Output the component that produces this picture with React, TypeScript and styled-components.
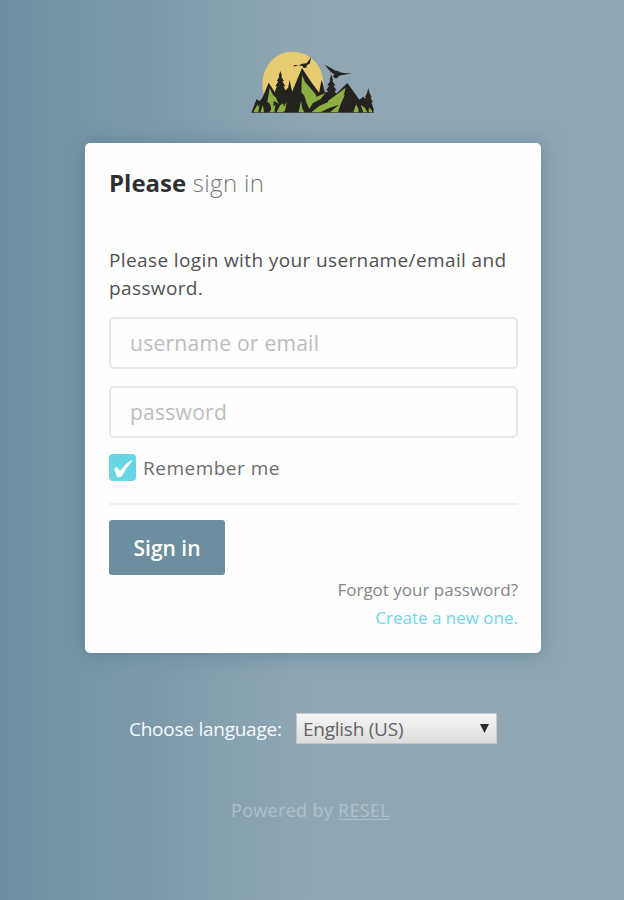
import React from "react";
import styled, { createGlobalStyle } from "styled-components";

const GlobalStyle = createGlobalStyle`
  * { box-sizing: border-box; }
  html, body { margin: 0; padding: 0; }
  body { font-family: "Open Sans", "Noto Sans", sans-serif; }
`;

const Page = styled.main`
  display: flex;
  flex-direction: column;
  align-items: center;
  width: 624px;
  height: 900px;
  overflow: hidden;
  padding-top: 42px;
  background: linear-gradient(90deg, #6e8ea0 0%, #7795a4 14%, #829dac 30%, #90a7b3 49%, #90a7b3 100%);
`;

const Logo = styled.svg`
  display: block;
  width: 140px;
  height: 80px;
  flex: none;
`;

const Card = styled.form`
  display: flex;
  flex-direction: column;
  width: 456px;
  height: 510px;
  margin: 21px 0 0 2px;
  padding: 23px 23px 0 24px;
  border-radius: 5px;
  background: #fefefe;
  box-shadow: 0 1px 20px rgba(82, 120, 146, 0.65);
`;

const Title = styled.h1`
  margin: 0;
  font-size: 24px;
  line-height: 34px;
  font-weight: 300;
  color: #777;
  white-space: nowrap;
  letter-spacing: 0.35px;
  strong { font-weight: 700; color: #303033; letter-spacing: 0; }
`;

const Message = styled.p`
  margin: 46px 0 0;
  font-size: 19px;
  line-height: 28px;
  color: #505052;
  letter-spacing: 0.38px;
`;

const Field = styled.input<{ $gap: number }>`
  width: 409px;
  height: 52px;
  margin: ${(p) => p.$gap}px 0 0;
  padding: 0 19px 1px;
  border: 2px solid #e9e9ea;
  border-radius: 5px;
  background: #fefefe;
  font: 400 21px "Open Sans", sans-serif;
  letter-spacing: 0.27px;
  color: #555;
  outline: none;
  &::placeholder { color: #bcbcbe; opacity: 1; }
`;

const Remember = styled.label`
  display: flex;
  align-items: center;
  gap: 7px;
  height: 27px;
  margin-top: 16px;
  font-size: 19px;
  letter-spacing: 0.5px;
  color: #6c6c6e;
`;

const CheckBox = styled.span`
  display: flex;
  width: 27px;
  height: 27px;
  border-radius: 4px;
  background: #68d5e4;
`;

const Divider = styled.hr`
  width: 100%;
  height: 2px;
  margin: 22px 0 0;
  border: 0;
  background: #f0f0f1;
`;

const SubmitButton = styled.button`
  width: 116px;
  height: 55px;
  margin-top: 15px;
  padding: 0;
  border: 0;
  border-radius: 3px;
  background: #6d8e9e;
  color: #fff;
  font: 600 21px "Open Sans", sans-serif;
`;

const Help = styled.div`
  display: flex;
  flex-direction: column;
  align-items: flex-end;
  margin-top: 1px;
  font-size: 17px;
  line-height: 28px;
  color: #858587;
`;

const CreateLink = styled.a`
  color: #72d5e4;
`;

const LanguageRow = styled.div`
  display: flex;
  align-items: center;
  align-self: flex-start;
  height: 31px;
  margin: 60px 0 0 129px;
  color: #f4faff;
  font-size: 19px;
  letter-spacing: -0.25px;
  white-space: nowrap;
`;

const LanguageLabel = styled.span`
  width: 167px;
`;

const Select = styled.div`
  display: flex;
  align-items: center;
  justify-content: space-between;
  width: 201px;
  height: 31px;
  padding: 0 7px 0 6px;
  border: 1px solid #c4c8ca;
  background: linear-gradient(#f6f6f6, #dddddd);
  color: #636365;
  font-size: 19px;
`;

const Footer = styled.footer`
  align-self: flex-start;
  margin: 53px 0 0 231px;
  font-size: 18px;
  line-height: 26px;
  white-space: nowrap;
  letter-spacing: 0.32px;
  color: #adc1cd;
  a { text-decoration: underline; text-underline-offset: 2px; }
`;

function MountainLogo() {
  return (
    <Logo viewBox="0 0 420 240" role="img" aria-label="Mountain logo">
      <path d="M64 152C50 84 94 29 150 29c56 0 96 44 94 100l-8 30H70z" fill="#e8cb70" />
      <g fill="#25231f">
        <path d="M28 212L44 171 53 178 62 166 80 122 98 150 125 150 138 138 150 150 180 78 205 116 232 153 246 150 284 154 316 123 340 156 352 173 364 164 376 176 388 190 396 212Z" />
        <path d="M115 87l5 15-2 2 8 13-5 1 9 15-5 0 8 19H97l8-19-5 0 9-15-5-1 8-13-2-2z" />
        <path d="M143 114l4 20 6 26h-20l6-26zM239 113l5 19 6 27h-20l5-27z" />
        <path d="M268 97l5 18-2 2 9 13-6 1 10 14-6 1 8 19h-36l8-19-6-1 10-14-6-1 9-13-2-2z" />
        <path d="M379 139l4 15 6 12-4 1 8 13-5 1 8 23-17 8-15-10 5-22-4-1 7-13-3-1 6-12z" />
        <path d="M154 74l3-5 14 1 10-5 13-1 13-18-3 18-9 6-2 7-8 1-4-6-12-2z" />
        <path d="M248 68l23 12 9 6 8 1 6 4 16 3h20l-31 6-8 1-5 7-8 1-5-6 4-6-13-9z" />
      </g>
      <g fill="#8caf42">
        <path d="M83 137L93 159 102 167 110 187 101 179 95 177 94 196 90 211 84 185 76 180Z" />
        <path d="M34 211L47 185 47 196 53 188 49 211ZM55 211L63 189 66 211ZM82 211L94 193 100 188 97 211ZM104 211L114 190 124 184 125 194 134 180 129 207 120 211Z" />
        <path d="M180 99L189 120 220 155 223 164 251 153 235 172 212 184 202 201 194 184 187 161 178 150Z" />
        <path d="M170 211L177 177 181 200 187 211Z" />
        <path d="M208 211L234 187 263 173 311 137 305 161 309 158 297 184 288 211Z" />
        <path d="M334 211L342 187 349 200 350 211ZM364 211L356 189 369 198 376 211ZM380 211L381 196 389 205 391 211Z" />
      </g>
      <path d="M198 210L234 184 263 165 257 181 233 191 208 210ZM236 211L261 198 291 188 264 211Z" fill="#25231f" />
    </Logo>
  );
}

export default function App() {
  return (
    <>
      <GlobalStyle />
      <Page>
        <MountainLogo />
        <Card onSubmit={(event) => event.preventDefault()}>
          <Title><strong>Please</strong> sign in</Title>
          <Message>Please login with your username/email and password.</Message>
          <Field $gap={15} placeholder="username or email" aria-label="Username or email" />
          <Field $gap={17} type="password" placeholder="password" aria-label="Password" />
          <Remember>
            <CheckBox>
              <svg width="27" height="27" viewBox="0 0 27 27" aria-hidden="true">
                <path d="M5 15Q7 12 9 14L11 17Q16 10 21 7L24 6Q17 14 13 22Q11 24 8 23Z" fill="#fff" />
              </svg>
            </CheckBox>
            <span>Remember me</span>
          </Remember>
          <Divider />
          <SubmitButton type="submit">Sign in</SubmitButton>
          <Help>
            <span>Forgot your password?</span>
            <CreateLink>Create a new one.</CreateLink>
          </Help>
        </Card>
        <LanguageRow>
          <LanguageLabel>Choose language:</LanguageLabel>
          <Select role="combobox" aria-label="Language">
            <span>English (US)</span>
            <svg width="9" height="9" viewBox="0 0 10 10" aria-hidden="true">
              <path d="M0 0h10L5 10z" fill="#2d2d2f" />
            </svg>
          </Select>
        </LanguageRow>
        <Footer>Powered by <a>RESEL</a></Footer>
      </Page>
    </>
  );
}
